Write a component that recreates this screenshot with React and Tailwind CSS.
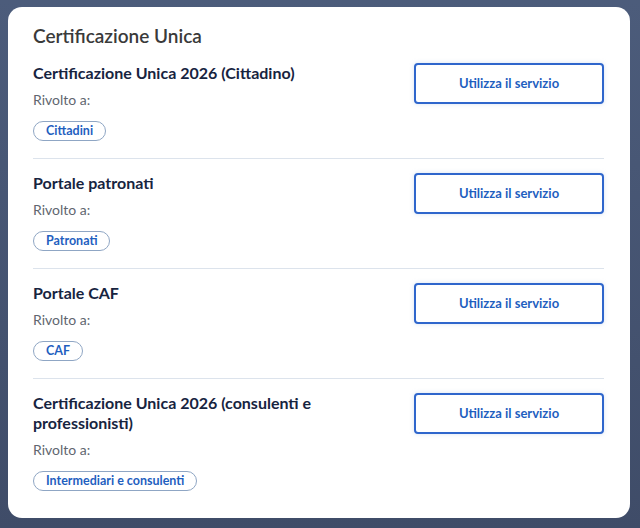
import React from "react";

const services = [
  { title: "Certificazione Unica 2026 (Cittadino)", target: "Cittadini" },
  { title: "Portale patronati", target: "Patronati" },
  { title: "Portale CAF", target: "CAF" },
  {
    title: "Certificazione Unica 2026 (consulenti e professionisti)",
    target: "Intermediari e consulenti",
  },
];

const ServiceRow = ({ service, first, last }) => {
  return (
    <div
      className={`flex items-start justify-between ${first ? "pt-0" : "pt-[14px]"} ${
        last ? "" : "pb-[17px] border-b border-[#dce3ec]"
      }`}
    >
      <div className="flex flex-col w-[300px]">
        {/* title */}
        <h3 className="text-[16px] leading-[20px] font-bold text-[#17243f]">
          {service.title}
        </h3>

        <p className="mt-[7px] text-[14px] leading-[20px] text-[#5f6670]">
          Rivolto a:
        </p>

        {/* target chip */}
        <div className="mt-[11px] flex">
          <span className="flex items-center h-[20px] px-[12px] rounded-full border border-[#8fa6c4] text-[12.5px] leading-none font-bold text-[#1f5fbf]">
            {service.target}
          </span>
        </div>
      </div>

      <button className="w-[190px] h-[41px] shrink-0 rounded-[4px] border-2 border-[#2f66cc] bg-white text-[13px] font-bold text-[#1f5fbf] shadow-[0_0_4px_rgba(180,200,230,0.5)]">
        Utilizza il servizio
      </button>
    </div>
  );
};

const App = () => {
  return (
    <div
      className="w-[640px] h-[528px] bg-gradient-to-b from-[#4c5c7b] to-[#3f4c68] pt-[7px] pl-[8px] pr-[10px]"
      style={{ fontFamily: "Lato, 'Open Sans', sans-serif" }}
    >
      <div className="w-[622px] h-[511px] bg-white rounded-[14px] pl-[25px] pr-[26px] pt-[17px]">
        {/* heading */}
        <h2 className="text-[19px] leading-[24px] font-semibold text-[#3a3a3a]">
          Certificazione Unica
        </h2>

        <div className="mt-[15px] flex flex-col">
          {services.map((s, i) => (
            <ServiceRow
              key={s.title}
              service={s}
              first={i === 0}
              last={i === services.length - 1}
            />
          ))}
        </div>
      </div>
    </div>
  );
};

export default App;
